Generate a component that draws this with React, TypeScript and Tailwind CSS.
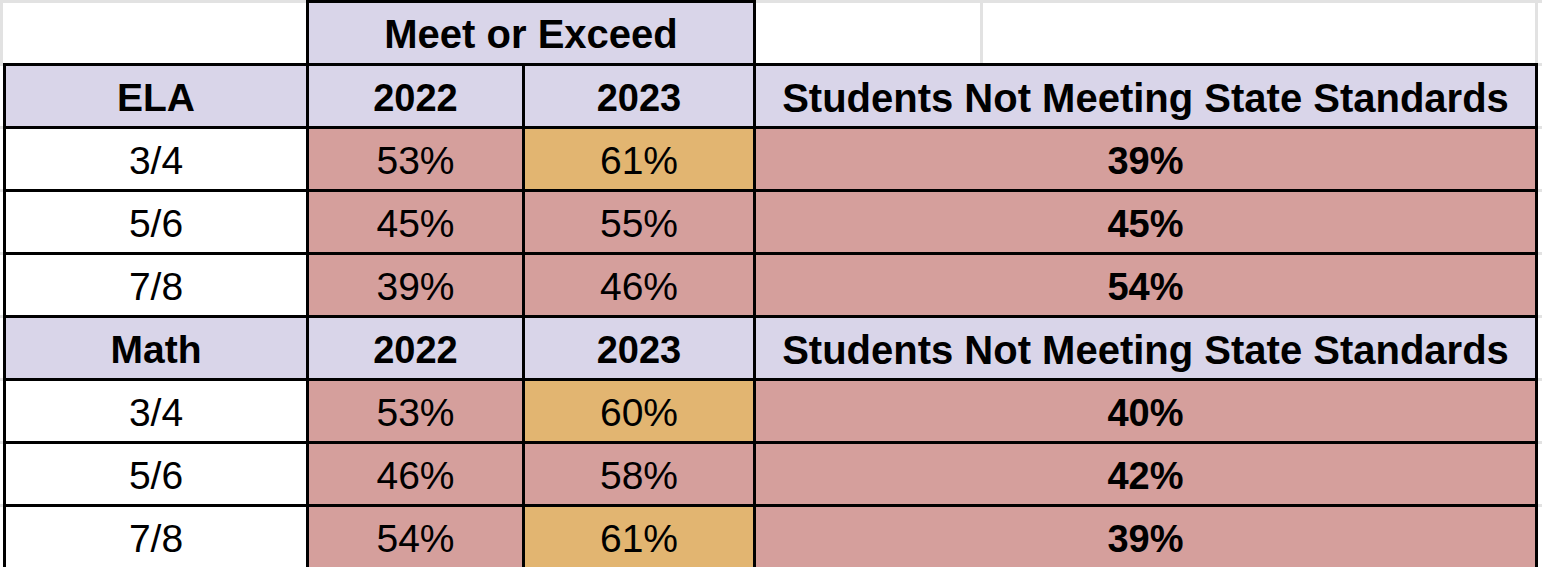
import React from "react"

type Row = {
  grade: string
  y22: string
  y23: string
  hit?: boolean
  notMeeting: string
}

type Section = {
  subject: string
  rows: Row[]
}

const sections: Section[] = [
  {
    subject: "ELA",
    rows: [
      { grade: "3/4", y22: "53%", y23: "61%", hit: true, notMeeting: "39%" },
      { grade: "5/6", y22: "45%", y23: "55%", notMeeting: "45%" },
      { grade: "7/8", y22: "39%", y23: "46%", notMeeting: "54%" },
    ],
  },
  {
    subject: "Math",
    rows: [
      { grade: "3/4", y22: "53%", y23: "60%", hit: true, notMeeting: "40%" },
      { grade: "5/6", y22: "46%", y23: "58%", notMeeting: "42%" },
      { grade: "7/8", y22: "54%", y23: "61%", hit: true, notMeeting: "39%" },
    ],
  },
]

const font = { fontFamily: '"Liberation Sans", Arial, sans-serif' }

const Cell = ({ children, className = "" }: { children?: React.ReactNode; className?: string }) => (
  <div className={`h-[60px] flex items-center justify-center pt-[3px] leading-none text-black ${className}`}>
    {children}
  </div>
)

const Stubs = ({ width }: { width: string }) => (
  <div className={`flex flex-col ${width}`}>
    {Array.from({ length: 8 }).map((_, i) => (
      <div key={i} className="h-[63px] border-t-[3px] border-[#e2e2e2] shrink-0" />
    ))}
  </div>
)

export default function App() {
  return (
    <div className="w-[1542px] h-[567px] overflow-hidden bg-white" style={font}>
      {/* first row: merged header with empty sheet cells around it */}
      <div className="flex h-[63px]">
        <div className="w-[306px] border-t-[3px] border-l-[3px] border-[#e2e2e2]" />
        <div className="w-[450px] border-[3px] border-b-0 border-black bg-[#d9d5e9] flex items-center justify-center pt-[2px] text-[40px] font-bold leading-none">
          Meet or Exceed
        </div>
        <div className="w-[224px] border-t-[3px] border-[#e2e2e2]" />
        <div className="w-[558px] border-t-[3px] border-l-[3px] border-r-[3px] border-[#e2e2e2]" />
        <div className="flex-1 border-t-[3px] border-[#e2e2e2]" />
      </div>

      <div className="flex">
        <Stubs width="w-[3px]" />
        <div className="grid grid-cols-[300px_213px_228px_779px] gap-[3px] bg-black p-[3px]">
          {sections.map((s) => (
            <React.Fragment key={s.subject}>
              <Cell className="bg-[#d9d5e9] font-bold text-[39px]">{s.subject}</Cell>
              <Cell className="bg-[#d9d5e9] font-bold text-[38px]">2022</Cell>
              <Cell className="bg-[#d9d5e9] font-bold text-[38px]">2023</Cell>
              <Cell className="bg-[#d9d5e9] font-bold text-[40px]">Students Not Meeting State Standards</Cell>
              {s.rows.map((r) => (
                <React.Fragment key={s.subject + r.grade}>
                  <Cell className="bg-white text-[39px]">{r.grade}</Cell>
                  <Cell className="bg-[#d59f9c] text-[39px]">{r.y22}</Cell>
                  <Cell className={`text-[39px] ${r.hit ? "bg-[#e2b571]" : "bg-[#d59f9c]"}`}>{r.y23}</Cell>
                  <Cell className="bg-[#d59f9c] font-bold text-[38px]">{r.notMeeting}</Cell>
                </React.Fragment>
              ))}
            </React.Fragment>
          ))}
        </div>
        <Stubs width="flex-1" />
      </div>
    </div>
  )
}
